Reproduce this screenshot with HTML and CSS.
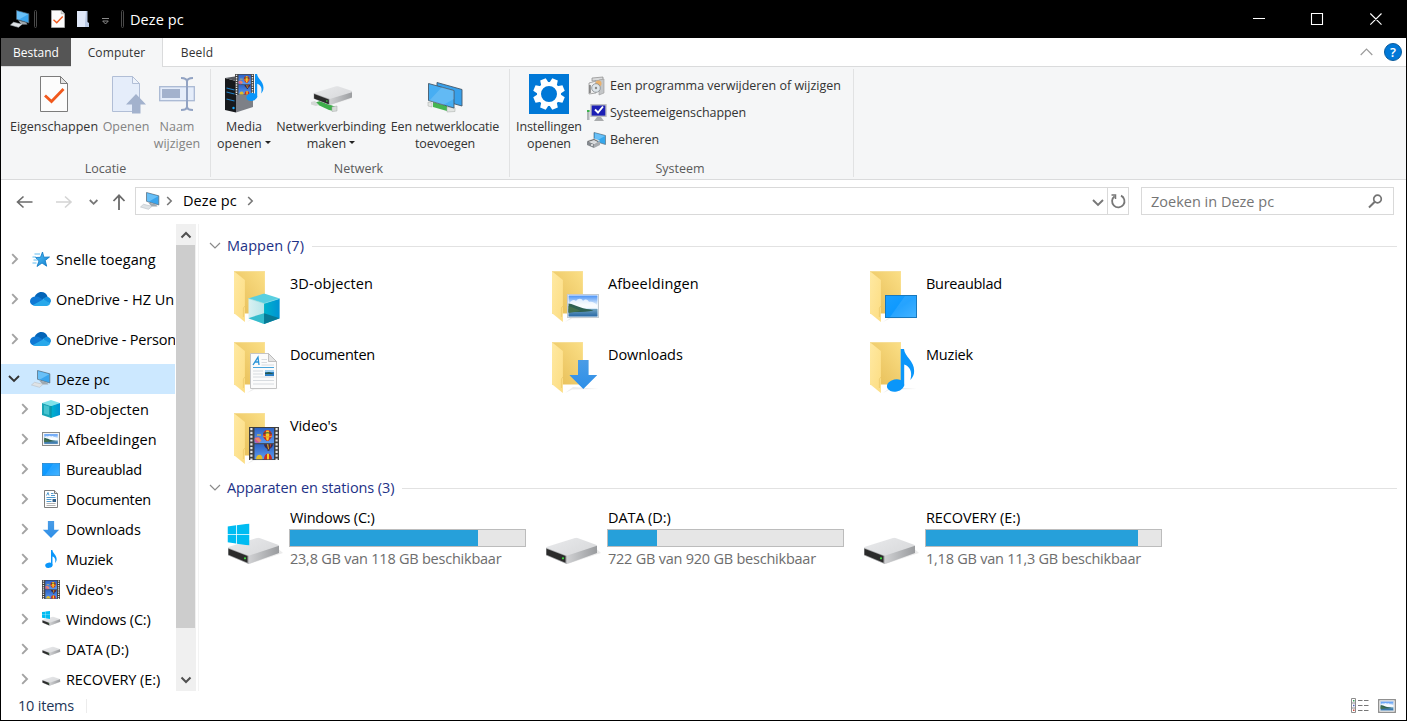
FILE: index.html
```html
<!DOCTYPE html>
<html lang="nl">
<head>
<meta charset="utf-8">
<title>Deze pc</title>
<link rel="stylesheet" href="styles.css">
</head>
<body>
<svg class="defs" width="0" height="0">
  <defs>
    <linearGradient id="gBack" x1="0" y1="1" x2="1" y2="0"><stop offset="0" stop-color="#e6bd55"/><stop offset=".5" stop-color="#f0cd6d"/><stop offset="1" stop-color="#fbdf86"/></linearGradient>
    <linearGradient id="gFlap" x1="0" y1="0" x2="1" y2="1"><stop offset="0" stop-color="#ffe9a2"/><stop offset="1" stop-color="#fcdd83"/></linearGradient>
    <linearGradient id="gSky" x1="0" y1="0" x2="0" y2="1"><stop offset="0" stop-color="#4a92f5"/><stop offset=".45" stop-color="#e4f1fb"/><stop offset="1" stop-color="#bcdcf0"/></linearGradient>
    <linearGradient id="gSea" x1="0" y1="0" x2="0" y2="1"><stop offset="0" stop-color="#6fa3c0"/><stop offset="1" stop-color="#2868a5"/></linearGradient>
    <linearGradient id="gTop" x1="0" y1="0" x2="1" y2="1"><stop offset="0" stop-color="#e9eaec"/><stop offset="1" stop-color="#d3d4d6"/></linearGradient>
    <linearGradient id="gSide" x1="0" y1="0" x2="1" y2="0"><stop offset="0" stop-color="#d0d1d3"/><stop offset="1" stop-color="#999b9e"/></linearGradient>
    <linearGradient id="gCubeL" x1="0" y1="0" x2="1" y2="0"><stop offset="0" stop-color="#d9f1f2"/><stop offset="1" stop-color="#b9e6ea"/></linearGradient>
    <linearGradient id="gCubeR" x1="0" y1="0" x2="1" y2="0"><stop offset="0" stop-color="#00b3cc"/><stop offset="1" stop-color="#0092d4"/></linearGradient>
    <linearGradient id="gScreen" x1="0" y1="0" x2="1" y2="1"><stop offset="0" stop-color="#1a9fff"/><stop offset=".5" stop-color="#0d99ff"/><stop offset="1" stop-color="#2fabff"/></linearGradient>
    <linearGradient id="gStar" x1="0" y1="0" x2="1" y2="1"><stop offset="0" stop-color="#57c3f7"/><stop offset="1" stop-color="#0f7fd0"/></linearGradient>
    <linearGradient id="gDl" x1="0" y1="0" x2="0" y2="1"><stop offset="0" stop-color="#4a9ce6"/><stop offset="1" stop-color="#2d8fe8"/></linearGradient>
    <linearGradient id="gFilm" x1="0" y1="0" x2="0" y2="1"><stop offset="0" stop-color="#2c62c4"/><stop offset="1" stop-color="#5d9af0"/></linearGradient>
  </defs>

  <symbol id="folder" viewBox="0 0 56 58">
    <path d="M20 54l7-3.500 27-.5-26-2z" fill="#ececec"/>
    <path d="M7 3.300H37.900V45.500H7z" fill="url(#gBack)"/>
    <path d="M7 3.300L17.900 12V54L7 45.300z" fill="url(#gFlap)"/>
    <path d="M7 3.600H37.900" stroke="#f6dc93" stroke-width=".7"/>
    <path d="M17.900 38l-1.500 2v9" stroke="#e8c261" stroke-width=".6" fill="none"/>
  </symbol>
  <symbol id="cube" viewBox="0 0 32 31">
    <path d="M0 5L16 0 32 5 16 10z" fill="#59cfe0"/>
    <path d="M0 5L16 10V31L0 25z" fill="url(#gCubeL)"/>
    <path d="M32 5L16 10V31L32 25z" fill="url(#gCubeR)"/>
    <path d="M0 25L16 20V31z" fill="#35bccd"/>
    <path d="M32 25L16 20V31z" fill="#087a96"/>
    <path d="M0 5L16 10 32 5" stroke="#8ee2ec" stroke-width=".6" fill="none"/>
  </symbol>
  <symbol id="cube-s" viewBox="0 0 18 18">
    <path d="M0 3L9 0 18 3 9 6z" fill="#7fe3ea"/>
    <path d="M0 3L9 6V18L0 15z" fill="#1aa5b5"/>
    <path d="M2 5L7 6.500V15L2 13.500z" fill="#46c3cf"/>
    <path d="M18 3L9 6V18L18 15z" fill="url(#gCubeR)"/>
    <path d="M9 6v12" stroke="#0a7f93" stroke-width=".8"/>
  </symbol>
  <symbol id="photo" viewBox="0 0 32 24" preserveAspectRatio="none">
    <rect x=".5" y=".5" width="31" height="23" fill="#fff" stroke="#c3cbd2"/>
    <rect x="1.500" y="1.500" width="29" height="21" fill="url(#gSky)"/>
    <path d="M2 10c2-4 5-5 7-3 2-3 6-3 7 0 3-3 5-1 6 1 3-1 6 1 8 3v3H2z" fill="#fff" opacity=".75"/>
    <path d="M1.500 15H30.500V22.500H1.500z" fill="url(#gSea)"/>
    <path d="M1.500 9.500c4 .5 7 2 11 3.500 5 2 9 2 14 3.500-8 2-18 1.500-25 1.500z" fill="#2f6152"/>
    <path d="M1.500 12c4 1 8 3 12 5l-12 2z" fill="#44714c"/>
  </symbol>
  <symbol id="screen" viewBox="0 0 32 23" preserveAspectRatio="none">
    <rect x=".5" y=".5" width="31" height="22" fill="url(#gScreen)" stroke="#1878bd"/>
    <path d="M5 22L20 1H31V22z" fill="#fff" opacity=".1"/>
  </symbol>
  <symbol id="doc" viewBox="0 0 27 36">
    <path d="M.5.5H18.500L26.500 8.500V35.500H.5z" fill="#fbfbfb" stroke="#c4c4c4"/>
    <path d="M18.500.5V8.500H26.500z" fill="#e4e4e4" stroke="#b5b5b5" stroke-width=".8"/>
    <path d="M3 12L8 4.200 9 12M4.800 9h4" fill="none" stroke="#2a94d8" stroke-width="1.300"/>
    <path d="M11.500 6.500H17M11.500 9.500H17M11.500 12H24M3 18H13M3 21H13M3 24H24M3 27.500H24M3 31H24" stroke="#d3d7db" stroke-width=".9"/>
    <path d="M3 14.500H24" stroke="#4aa5dc"/>
    <rect x="15" y="17" width="9" height="6" fill="#2c7fc4"/><path d="M15 17h9v2h-9z" fill="#a5d4f4"/><path d="M15 20l4-1 5 2H15z" fill="#28584c"/>
  </symbol>
  <symbol id="down" viewBox="0 0 28 29"><path d="M8.700 0H19.300V15H28L14 29 0 15H8.700z" fill="url(#gDl)"/></symbol>
  <symbol id="note" viewBox="0 0 28 43">
    <ellipse cx="8.800" cy="36.500" rx="8.700" ry="6.200" fill="#0a96fa" transform="rotate(-12 8.800 36.500)"/>
    <path d="M14 0H17.300C18 8 27.500 11.500 27.500 22c0 4-1.500 6.500-3.800 9C26 22 23 17.500 17.500 15.500V37l-3.500 1z" fill="#0a96fa"/>
  </symbol>
  <symbol id="film" viewBox="0 0 30 33">
    <rect width="30" height="33" fill="#3f3f3f"/>
    <path d="M2.400 1V33M27.600 1V33" stroke="#e7e7e7" stroke-width="2.200" stroke-dasharray="2.200 1.600"/>
    <rect x="5.500" y="1" width="19.500" height="15.200" fill="url(#gFilm)"/>
    <rect x="5.500" y="17.200" width="19.500" height="15" fill="url(#gFilm)"/>
    <circle cx="8.500" cy="13" r="3" fill="#c85a9a"/><path d="M5.500 11.500l4-1 3 3-2 2z" fill="#e58a6a"/><path d="M8 8h4" stroke="#e0c040" stroke-width="1.200"/>
    <path d="M14 8c0-3 2-5 4.500-5S23 5 23 8s-2 4.500-3.500 6h-2C16 12.500 14 11 14 8z" fill="#c92b23"/><path d="M17.300 3.400c-1 3-.6 6.500.4 10h1.600c1-3.500 1.400-7 .4-10z" fill="#f6cf27"/><path d="M14 9q4.500 2 9 0" fill="none" stroke="#e8a02a" stroke-width="1.300"/><path d="M14.500 6.500q4-1.500 8 0" fill="none" stroke="#2b5a3e" stroke-width="1.100"/>
    <path d="M15 17.200h9c0 2-2 4-3.500 5v1.500h-2V22.200C17 21.200 15 19.200 15 17.200z" fill="#3f2b40"/><path d="M18 17.200h1.300l.6 5h-.8z" fill="#f0b429"/><path d="M21 17.200h1.300l-1.500 4.500z" fill="#c93a30"/>
    <path d="M7 32.200c0-3 1.500-4.500 3.500-4.500s3 1.500 3 4.500z" fill="#e2bd28"/><path d="M15 32.200c0-3.500 1.500-5.500 4-5.500s4 2 4 5.500z" fill="#c92b23"/><path d="M18 26.800h2v5.400h-2z" fill="#f6cf27"/>
  </symbol>
  <symbol id="drive" viewBox="0 0 56 30">
    <path d="M21 27L56 15.500 52 12z" fill="#ebebeb"/>
    <path d="M1 10.500Q1 9.700 2 9.300L30 .4Q31.300 0 32.500.4L51 7.200Q52 7.600 52 8.500V15.500L21.700 26.500 1 17.700z" fill="url(#gTop)"/>
    <path d="M52 8.200V15.500L21.700 26.500V18.200z" fill="url(#gSide)"/>
    <path d="M1 10.200L21.700 18.200V26.500L1 17.800z" fill="#a5a6a8"/>
    <path d="M1.500 11.200L20.500 18.600V25.300L1.500 17.300z" fill="#2b2b2b"/>
    <circle cx="18" cy="20.800" r="1.100" fill="#3fe03f"/>
  </symbol>
  <symbol id="winlogo" viewBox="0 0 22 22">
    <path d="M0 3L8.500 1.800V10.500H0zM9.300 1.700L22 0V10.500H9.300zM0 11.300H8.500V20L0 18.800zM9.300 11.300H22V22L9.300 20.200z" fill="#00bcf2"/>
  </symbol>
  <symbol id="pc" viewBox="0 0 20 18">
    <path d="M6.500.5L18.800 3.800V13L6.500 9.300z" fill="#3aa5ee" stroke="#5b6a76" stroke-width=".7"/>
    <path d="M7 1.200L18.200 4.200 9 9.500 7 8.900z" fill="#69c0f7"/>
    <path d="M8 10.200L16 12.600 17.500 14.500 11.500 14.500z" fill="#9fa8af"/>
    <path d="M3.500 12.300L12 14.300 8.500 17.300 .5 15z" fill="#dfe3e6" stroke="#b9c0c6" stroke-width=".6"/>
  </symbol>
  <symbol id="cloud" viewBox="0 0 21 14">
    <path d="M4.500 6C5 2.500 8 0 11.300 0c3 0 5.500 1.800 6.300 4.700L12 8z" fill="#0364b8"/>
    <path d="M5 4.600c2-.3 3.500.2 5 1.100L14 8 4 13.600C1.500 13.300 0 11.500 0 9.300 0 6.800 2 4.800 5 4.600z" fill="#0f78d4"/>
    <path d="M13 6.500l4-1.800c2.300.2 4 2 4 4.600l-1 2L15 10z" fill="#1490df"/>
    <path d="M3 13.100L13.500 7.300 20.300 11.500C19.500 13 18.300 14 16.500 14H5C4.200 14 3.600 13.700 3 13.100z" fill="#28a8ea"/>
  </symbol>
  <symbol id="star" viewBox="0 0 18 17">
    <path d="M10.500 1l1.400 5.200L17.500 6l-4.300 3.500 1.500 5.700L10 12l-5 3.500 2-5.700L3.500 6.500l5-.2z" fill="url(#gStar)" stroke="#0b76c3" stroke-width=".8"/>
    <path d="M2.500 3H8M.5 6H4M1.500 9H6M.5 12H4.500" stroke="#51b4ef" stroke-width=".9"/>
  </symbol>
  <symbol id="page-check" viewBox="0 0 28 36">
    <path d="M.5.500H20.500L27.500 7.500V35.500H.5z" fill="#fcfcfc" stroke="#7c7c7c"/>
    <path d="M20.500.5V7.500H27.500z" fill="#e3e3e3" stroke="#7c7c7c"/>
    <path d="M5 19.500L11.500 25.500 23.500 13" fill="none" stroke="#f1581c" stroke-width="2.800"/>
  </symbol>
  <symbol id="chev-r" viewBox="0 0 8 12"><path d="M1.200 1.200L6 6 1.200 10.800" fill="none" stroke="currentColor" stroke-width="1.900"/></symbol>
  <symbol id="chev-d" viewBox="0 0 12 8"><path d="M1 1L6 6 11 1" fill="none" stroke="currentColor" stroke-width="var(--w,1.900)"/></symbol>
</svg>

<div class="window">
  <header class="titlebar">
    <svg class="tb-pc" width="20" height="18"><use href="#pc"/></svg>
    <svg class="tb-sep" width="3" height="18"><rect x=".5" y=".5" width="2" height="17" rx="1" fill="none" stroke="#4a4a4a"/></svg>
    <svg class="tb-check" width="14" height="18"><use href="#page-check"/></svg>
    <svg class="tb-folder" width="12" height="16" viewBox="0 0 12 16"><path d="M0 0H9V12H12V16H0z" fill="#dfe8f8"/><path d="M9 0h1.500v11l1.500 1v4H8V12z" fill="#b9c9e4"/></svg>
    <svg class="tb-more" width="7" height="7" viewBox="0 0 7 7"><path d="M0 .5H7M.7 3h5.600L3.500 6z" fill="none" stroke="#9a9a9a" stroke-width=".9"/></svg>
    <svg class="tb-sep2" width="3" height="18"><rect x=".5" y=".5" width="2" height="17" rx="1" fill="none" stroke="#4a4a4a"/></svg>
    <span class="title t15 w-pc">Deze pc</span>
    <svg class="win-ctl" width="130" height="14" viewBox="0 0 130 14"><path d="M0 6.500H12M58.500 1.500H69.500V12.500H58.500zM117.300 1.500L128.500 12.700M128.500 1.500L117.300 12.700" fill="none" stroke="#fff" stroke-width="1.100"/></svg>
  </header>

  <nav class="tabs">
    <span class="tab file">Bestand</span>
    <span class="tab active">Computer</span>
    <span class="tab view">Beeld</span>
    <svg class="collapse" width="13" height="8" viewBox="0 0 13 8"><path d="M.7 7L6.500 1.200 12.300 7" fill="none" stroke="#9b9b9b" stroke-width="1.200"/></svg>
    <span class="help">?</span>
  </nav>

  <section class="ribbon">
    <div class="group g1">
      <div class="tools">
        <div class="tool b92"><svg class="ic" width="28" height="36"><use href="#page-check"/></svg><span>Eigenschappen</span></div>
        <div class="tool b52 off"><svg class="ic ic-open" width="36" height="38" viewBox="0 0 36 38"><path d="M1.500.5H21.500L28.500 7.500V35.500H1.500z" fill="#e5edfa" stroke="#b1bed6"/><path d="M21.500.5V7.500H28.500z" fill="#eef3fb" stroke="#b1bed6"/><path d="M25 18L35 28.500H29.500V37.500H21V28.500H15z" fill="#a3b2cd"/></svg><span>Openen</span></div>
        <div class="tool b50 off"><svg class="ic" width="36" height="36" viewBox="0 0 36 36"><rect x=".7" y="10.700" width="34.600" height="14" fill="#e5edfa" stroke="#a9b8d3" stroke-width="1.300"/><rect x="3" y="13" width="18" height="9" fill="#a3b2cd"/><path d="M28 4V32M22 2c3 0 6 1 6 3.500C28 3 31 2 34 2M22 34c3 0 6-1 6-3.500 0 2.500 3 3.500 6 3.500" fill="none" stroke="#92a3c3" stroke-width="2"/></svg><span>Naam<br>wijzigen</span></div>
      </div>
      <div class="caption">Locatie</div>
    </div>
    <div class="group g2">
      <div class="tools">
        <div class="tool b56"><svg class="ic" width="40" height="40" viewBox="0 0 40 40"><path d="M1 4L12 7V38.500L1 36z" fill="#17191c"/><path d="M1 4L14 2 30 5 12 7z" fill="#55585e"/><path d="M12 7L29 5V33L12 38.500z" fill="#7d8087"/><path d="M2.500 14l8 2M2.500 18l8 2M2.500 25l8 2" stroke="#2382c8" stroke-width="1.200"/><circle cx="9.500" cy="34" r="1.200" fill="#17a9ff"/><use href="#film" x="11" y="0" width="19" height="21"/><use href="#note" x="22" y="0" width="18" height="27"/></svg><span>Media<br>openen <i class="dd"></i></span></div>
        <div class="tool b114"><svg class="ic" width="42" height="40" viewBox="0 0 42 40"><path d="M4 29l6-2 16 6-2 4-5-1z" fill="#3fae4b"/><path d="M1 28l4-1 4 4-3 1-5-1.500z" fill="#d4d8d6"/><path d="M22 33l5-1v5l-5 .5z" fill="#d7dbd9" stroke="#a5aaa7" stroke-width=".5"/><g transform="translate(3 12) scale(.77 .72)"><use href="#drive" width="56" height="30"/></g></svg><span class="l-net">Netwerkverbinding<br>maken <i class="dd"></i></span></div>
        <div class="tool b114"><svg class="ic" width="36" height="40" viewBox="0 0 36 40"><path d="M10 8.500L35 15.500V32L10 25z" fill="#38a0ea" stroke="#45586a" stroke-width=".9"/><path d="M6 28l14 4v5L6 33z" fill="#45b552"/><path d="M1 28l4 1v4l-4-1zM20 33l8 1v3.500l-8 .5z" fill="#e2e5e3" stroke="#a5aaa7" stroke-width=".5"/><path d="M1.500 9.500L27 16.500V34L1.500 26.500z" fill="#47aef3" stroke="#45586a" stroke-width=".9"/><path d="M2 27L15 13 27 16.500V25L16 31z" fill="#fff" opacity=".15"/></svg><span class="l-net">Een netwerklocatie<br>toevoegen</span></div>
      </div>
      <div class="caption">Netwerk</div>
    </div>
    <div class="group g3">
      <div class="tools">
        <div class="tool b70"><svg class="gear" width="40" height="40" viewBox="0 0 40 40"><rect width="40" height="40" fill="#0078d7"/><g transform="translate(20 20)" fill="#fff"><g id="teeth"><path d="M-4-10.500L-3-15.800H3L4-10.500z" transform="rotate(22.500)"/><path d="M-4-10.500L-3-15.800H3L4-10.500z" transform="rotate(67.500)"/><path d="M-4-10.500L-3-15.800H3L4-10.500z" transform="rotate(112.500)"/><path d="M-4-10.500L-3-15.800H3L4-10.500z" transform="rotate(157.500)"/></g><use href="#teeth" transform="rotate(180)"/><circle r="10" fill="none" stroke="#fff" stroke-width="4"/></g></svg><span class="l-inst">Instellingen<br>openen</span></div>
        <div class="links">
          <div><svg width="20" height="20" viewBox="0 0 20 20"><path d="M5 2L16 1V4L5 5z" fill="#d9dadb" stroke="#888" stroke-width=".7"/><path d="M12 4l5-1v14l-5 2z" fill="#c4c6c8" stroke="#999" stroke-width=".6"/><path d="M2 7l7-2v12l-7 1z" fill="#eee" stroke="#8a8a8a" stroke-width=".7"/><circle cx="11.500" cy="7.500" r="3" fill="#e9b06a"/><circle cx="9" cy="12" r="4.300" fill="#dfe6ea" stroke="#858b90" stroke-width=".8"/><circle cx="9" cy="12" r="1.200" fill="#888"/><path d="M3 9v8" stroke="#444"/></svg><span>Een programma verwijderen of wijzigen</span></div>
          <div><svg width="20" height="18" viewBox="0 0 20 18"><path d="M0 6h2.500v10H0z" fill="#b0b5b8"/><path d="M0 6h2.500v2H0z" fill="#39b54a"/><rect x="4" y=".8" width="15" height="11.500" fill="#1c1fb5" stroke="#bcbdbe" stroke-width="1.400"/><path d="M8 5.500l3 3 5-6" fill="none" stroke="#fff" stroke-width="1.900"/><path d="M10 13h4l3 4H7z" fill="#a9abad"/></svg><span class="l-sys">Systeemeigenschappen</span></div>
          <div><svg width="20" height="18" viewBox="0 0 20 18"><path d="M7 1.500L18.500 4.500V13.500L7 10z" fill="#35a7ec" stroke="#5d7180" stroke-width=".7"/><path d="M8 2.200L18 5 10 9.500 8 9z" fill="#69c0f7"/><path d="M0 9.500l7-2 6 2-6 3z" fill="#d9dbdd"/><path d="M0 10l7 3v4l-7-3z" fill="#84898e"/><path d="M7 13l6-3v4l-6 3z" fill="#a7abaf"/><path d="M1 10.500l6-2 4 2" fill="none" stroke="#666"/><path d="M4 14h2" stroke="#eee" stroke-width="1.500"/></svg><span class="l-beh">Beheren</span></div>
        </div>
      </div>
      <div class="caption">Systeem</div>
    </div>
  </section>

  <section class="addressrow">
    <svg class="navs" width="112" height="18" viewBox="0 0 112 18"><g fill="none" stroke-width="1.600"><path d="M2.500 9H17.500M8.500 3.500L2.500 9 8.500 14.500" stroke="#6b6b6b"/><path d="M41 9H56M50 3.500L56 9 50 14.500" stroke="#d4d4d4"/><path d="M74.800 7L78.600 10.800 82.400 7" stroke="#777" stroke-width="1.800"/><path d="M104 17V2.500M98.500 8L104 2.300 109.500 8" stroke="#6b6b6b" stroke-width="1.800"/></g></svg>
    <div class="address">
      <svg width="20" height="18"><use href="#pc"/></svg>
      <svg class="c1" width="7" height="10"><use href="#chev-r"/></svg>
      <span class="t15 crumb w-pc">Deze pc</span>
      <svg class="c1" width="7" height="10"><use href="#chev-r"/></svg>
      <svg class="drop" width="12" height="8"><use href="#chev-d"/></svg>
      <div class="refresh"><svg width="16" height="16" viewBox="0 0 16 16"><path d="M4.600 3.200A6.200 6.200 0 1 0 11 2.600" fill="none" stroke="#777" stroke-width="1.800"/><path d="M1.500 2H5.500V6" fill="none" stroke="#777" stroke-width="1.500"/></svg></div>
    </div>
    <div class="search"><span class="t15 w-zoek">Zoeken in Deze pc</span><svg width="15" height="15" viewBox="0 0 15 15"><circle cx="9.500" cy="5" r="3.800" fill="none" stroke="#747474" stroke-width="1.700"/><path d="M6.800 7.800L1 13.500" stroke="#747474" stroke-width="2"/></svg></div>
  </section>

  <main class="body">
    <aside class="tree t15">
      <div class="row top"><svg class="ch" width="8" height="12"><use href="#chev-r"/></svg><svg class="i" width="18" height="17"><use href="#star"/></svg><span class="w-snel">Snelle toegang</span></div>
      <div class="row top"><svg class="ch" width="8" height="12"><use href="#chev-r"/></svg><svg class="i cloud" width="21" height="14"><use href="#cloud"/></svg><span class="w-hz">OneDrive - HZ Un</span></div>
      <div class="row top"><svg class="ch" width="8" height="12"><use href="#chev-r"/></svg><svg class="i cloud" width="21" height="14"><use href="#cloud"/></svg><span>OneDrive - Person</span></div>
      <div class="row top sel"><svg class="ch open" width="12" height="8"><use href="#chev-d"/></svg><svg class="i" width="20" height="18"><use href="#pc"/></svg><span class="w-pc">Deze pc</span></div>
      <div class="row"><svg class="ch" width="8" height="12"><use href="#chev-r"/></svg><svg class="i" width="18" height="18"><use href="#cube-s"/></svg><span class="w-3d">3D-objecten</span></div>
      <div class="row"><svg class="ch" width="8" height="12"><use href="#chev-r"/></svg><svg class="i" width="18" height="14" viewBox="0 0 18 14"><rect x=".5" y=".5" width="17" height="13" fill="#fff" stroke="#8b8b8b"/><use href="#photo" x="1.500" y="1.500" width="15" height="11"/></svg><span class="w-afb">Afbeeldingen</span></div>
      <div class="row"><svg class="ch" width="8" height="12"><use href="#chev-r"/></svg><svg class="i" width="18" height="13"><use href="#screen"/></svg><span class="w-bur">Bureaublad</span></div>
      <div class="row"><svg class="ch" width="8" height="12"><use href="#chev-r"/></svg><svg class="i" width="18" height="18" viewBox="0 0 18 18"><path d="M2.500.5H12.500L15.500 3.500V17.500H2.500z" fill="#fff" stroke="#7d7d7d"/><path d="M12.500.5V3.500h3" fill="#ddd" stroke="#7d7d7d"/><path d="M4.500 5.500L6 2.500 7 5.500M9 3.500h2.500M4.500 7.500h9M4.500 9.500h5M4.500 11.500h5M9 5.500h4" fill="none" stroke="#3d8fca" stroke-width=".9"/><path d="M4.500 13.500h9M4.500 15.500h9" stroke="#aaa" stroke-width=".9"/><path d="M10.500 9h3.500v3h-3.500z" fill="#315f89"/></svg><span class="w-bur">Documenten</span></div>
      <div class="row"><svg class="ch" width="8" height="12"><use href="#chev-r"/></svg><svg class="i" width="18" height="17"><use href="#down"/></svg><span class="w-dow">Downloads</span></div>
      <div class="row"><svg class="ch" width="8" height="12"><use href="#chev-r"/></svg><svg class="i" width="18" height="18"><use href="#note"/></svg><span>Muziek</span></div>
      <div class="row"><svg class="ch" width="8" height="12"><use href="#chev-r"/></svg><svg class="i" width="18" height="19" viewBox="0 0 30 33" preserveAspectRatio="none"><use href="#film" width="30" height="33"/></svg><span class="w-dow">Video's</span></div>
      <div class="row"><svg class="ch" width="8" height="12"><use href="#chev-r"/></svg><svg class="i" width="19" height="16" viewBox="0 0 19 16"><use href="#drive" y="5.500" width="19.500" height="10.400"/><use href="#winlogo" y="0" width="8" height="8"/></svg><span>Windows (C:)</span></div>
      <div class="row"><svg class="ch" width="8" height="12"><use href="#chev-r"/></svg><svg class="i" width="19" height="16" viewBox="0 0 19 16"><use href="#drive" y="5.500" width="19.500" height="10.400"/></svg><span class="w-data">DATA (D:)</span></div>
      <div class="row"><svg class="ch" width="8" height="12"><use href="#chev-r"/></svg><svg class="i" width="19" height="16" viewBox="0 0 19 16"><use href="#drive" y="5.500" width="19.500" height="10.400"/></svg><span class="w-data">RECOVERY (E:)</span></div>
    </aside>
    <div class="scroll"><svg width="12" height="8" viewBox="0 0 12 8"><path d="M1.500 6.500L6 2 10.500 6.500" fill="none" stroke="#505050" stroke-width="2"/></svg><div class="thumb"></div><svg class="sd" width="12" height="8" viewBox="0 0 12 8"><path d="M1.500 1.500L6 6 10.500 1.500" fill="none" stroke="#505050" stroke-width="2"/></svg></div>

    <div class="content t15">
      <div class="ghead"><svg width="12" height="8"><use href="#chev-d"/></svg><span class="w-map">Mappen (7)</span><hr></div>
      <div class="tiles">
        <div class="tile"><svg width="56" height="58"><use href="#folder" width="56" height="58"/><use href="#cube" x="21.300" y="25.300" width="31.500" height="31"/></svg><span class="w-3d">3D-objecten</span></div>
        <div class="tile"><svg width="56" height="58"><use href="#folder" width="56" height="58"/><use href="#photo" x="22" y="26" width="32" height="24"/></svg><span class="w-afb">Afbeeldingen</span></div>
        <div class="tile"><svg width="56" height="58"><use href="#folder" width="56" height="58"/><use href="#screen" x="22" y="27" width="32" height="23"/></svg><span class="w-bur">Bureaublad</span></div>
        <div class="tile"><svg width="56" height="58"><use href="#folder" width="56" height="58"/><use href="#doc" x="23" y="14" width="27" height="36"/></svg><span class="w-bur">Documenten</span></div>
        <div class="tile"><svg width="56" height="58"><use href="#folder" width="56" height="58"/><use href="#down" x="24.300" y="21" width="28" height="29"/></svg><span class="w-dow">Downloads</span></div>
        <div class="tile"><svg width="56" height="58"><use href="#folder" width="56" height="58"/><use href="#note" x="23.700" y="10" width="28" height="43"/></svg><span>Muziek</span></div>
        <div class="tile"><svg width="56" height="58"><use href="#folder" width="56" height="58"/><use href="#film" x="22" y="17" width="30" height="33"/></svg><span class="w-dow">Video's</span></div>
      </div>
      <div class="ghead g-drives"><svg width="12" height="8"><use href="#chev-d"/></svg><span class="w-app">Apparaten en stations (3)</span><hr></div>
      <div class="tiles drives">
        <div class="drive"><svg width="56" height="56"><use href="#drive" y="22.500" width="56" height="30"/><use href="#winlogo" x=".5" y="8.500" width="22" height="22"/></svg><div><span class="dn">Windows (C:)</span><div class="bar"><b style="width:188px"></b></div><span class="sub">23,8 GB van 118 GB beschikbaar</span></div></div>
        <div class="drive"><svg width="56" height="56"><use href="#drive" y="22.500" width="56" height="30"/></svg><div><span class="dn w-data">DATA (D:)</span><div class="bar"><b style="width:49px"></b></div><span class="sub">722 GB van 920 GB beschikbaar</span></div></div>
        <div class="drive"><svg width="56" height="56"><use href="#drive" y="22.500" width="56" height="30"/></svg><div><span class="dn w-data">RECOVERY (E:)</span><div class="bar"><b style="width:212px"></b></div><span class="sub">1,18 GB van 11,3 GB beschikbaar</span></div></div>
      </div>
    </div>
  </main>

  <footer class="status t15"><span class="count">10 items</span>
    <svg class="views" width="50" height="18" viewBox="0 0 50 18"><path d="M1.500 1.500H5.500V15.500H1.500zM1.500 6H5.500M1.500 11H5.500" fill="#fff" stroke="#8c8c8c"/><path d="M3 3h1.500v1.500H3z" fill="#37a05b"/><path d="M3 7.800h1.500v1.500H3z" fill="#4b65b8"/><path d="M3 12.500h1.500V14H3z" fill="#d04a3a"/><path d="M8 3.500h4.500M14 3.500h4.500M8 8.500h4.500M14 8.500h4.500M8 13.500h4.500M14 13.500h4.500" stroke="#777"/><rect x="28.700" y="2.700" width="16.600" height="12.600" fill="#fff" stroke="#8c8c8c" stroke-width="1.300"/><use href="#photo" x="30" y="4" width="14" height="10"/></svg>
  </footer>
</div>
</body>
</html>
```
FILE: styles.css
```css
* { box-sizing: border-box; }
body { margin: 0; font-family: "Open Sans", "Noto Sans", sans-serif; color: #000; background: #000; }
svg { display: block; flex: none; }
.defs { position: absolute; }
.t15 { font-size: 14.5px; letter-spacing: -.2px; white-space: nowrap; }
.window { width: 1407px; height: 721px; display: flex; flex-direction: column; background: #fff; border: solid #000; border-width: 0 1px 1px; }

/* per-label tracking */
.w-pc { letter-spacing: .1px; }
.w-zoek { letter-spacing: 0; }
.w-snel, .w-map { letter-spacing: .05px; }
.w-hz { letter-spacing: 0; }
.w-3d { letter-spacing: .08px; }
.w-afb { letter-spacing: .14px; }
.w-bur { letter-spacing: -.29px; }
.w-dow, .w-app, .w-data { letter-spacing: -.1px; }

.titlebar { height: 38px; background: #000; color: #fff; display: flex; align-items: center; padding-left: 9px; }
.tb-sep { margin-left: 4px; }
.tb-check { margin-left: 14px; }
.tb-folder { margin-left: 12px; }
.tb-more { margin: 5px 0 0 13px; }
.tb-sep2 { margin-left: 12px; }
.title { margin-left: 6px; }
.win-ctl { margin-left: auto; margin-right: 23px; }

.tabs { height: 29px; display: flex; border-bottom: 1px solid #dadbdc; font-size: 12px; color: #333; align-items: stretch; }
.tab { display: flex; align-items: center; justify-content: center; }
.file { width: 70px; height: 28px; background: #555; color: #fff; }
.active { width: 92px; height: 29px; background: #f5f6f7; border-right: 1px solid #dadbdc; letter-spacing: .15px; }
.view { width: 68px; height: 28px; letter-spacing: .15px; }
.collapse { margin: 10px 11px 0 auto; }
.help { width: 18px; height: 18px; margin: 5px 4px 0 0; border-radius: 50%; background: #0078d7; border: 1px solid #0c5c9c; color: #fff; font-size: 13px; font-weight: 600; line-height: 16px; text-align: center; }

.ribbon { height: 113px; background: #f5f6f7; border-bottom: 1px solid #dadbdc; display: flex; font-size: 12.500px; line-height: 17px; color: #333; white-space: nowrap; }
.group { margin: 2px 0; border-right: 1px solid #e1e2e3; height: 108px; display: flex; flex-direction: column; }
.g1 { width: 210px; padding-left: 7px; }
.g2 { width: 299px; padding-left: 5px; }
.g3 { width: 344px; padding-left: 4px; }
.tools { display: flex; height: 91px; }
.tool { display: flex; flex-direction: column; align-items: center; text-align: center; height: 83px; }
.tool > span { margin-top: auto; height: 34px; }
.tool .ic { margin-top: 7px; }
.tool .ic-open { margin-left: 5px; }
.g2 .tool .ic { margin-top: 5px; }
.gear { margin-top: 5px; }
.b92 { width: 92px; }
.b52 { width: 52px; }
.b50 { width: 50px; }
.b56 { width: 56px; margin-right: 2px; }
.b114 { width: 114px; }
.b70 { width: 70px; margin-right: 3px; }
.l-net, .l-inst { letter-spacing: -.12px; }
.off { color: #838383; }
.dd { display: inline-block; border: solid transparent; border-width: 3.500px 3.500px 0; border-top-color: #222; vertical-align: 4px; }
.links { padding-top: 3px; }
.links div { display: flex; align-items: center; gap: 3px; height: 27px; }
.l-sys, .l-beh { letter-spacing: -.06px; }
.caption { text-align: center; color: #5a5a5a; }
.g1 .caption { padding-right: 7px; }
.g2 .caption { padding-right: 8px; }
.g3 .caption { padding-right: 7px; }

.addressrow { height: 44px; display: flex; padding: 7px 0 0 14px; }
.navs { margin: 6px 8px 0 0; }
.address { width: 994px; height: 28px; border: 1px solid #d9d9d9; display: flex; align-items: center; padding-left: 4px; color: #777; }
.address .c1 { margin-left: 6px; }
.crumb { margin: -1px 0 0 10px; color: #000; }
.address .crumb + .c1 { margin-left: 10px; }
.drop { margin-left: auto; margin-right: 3px; margin-top: 3px; }
.refresh { width: 21px; height: 26px; border-left: 1px solid #d9d9d9; display: flex; align-items: center; justify-content: center; }
.search { width: 253px; height: 28px; margin-left: 12px; border: 1px solid #d9d9d9; display: flex; align-items: center; justify-content: space-between; padding: 0 10px 0 9px; color: #757575; }

.body { height: 467px; display: flex; }
.tree { width: 175px; padding-top: 20px; overflow: hidden; }
.row { width: 174px; height: 30px; display: grid; grid-template-columns: 20px 20px 1fr; align-items: center; padding-left: 20px; overflow: hidden; }
.row .i { justify-self: center; }
.row span { padding-left: 5px; }
.row.top { padding-left: 10px; margin-bottom: 10px; }
.row .cloud { justify-self: start; margin-left: -1px; }
.row .ch { color: #a3a3a3; }
.row .open { color: #333; margin-left: -3px; }
.row.sel { background: #cce8ff; margin-bottom: 0; }
.scroll { width: 20px; background: #f0f0f0; display: flex; flex-direction: column; align-items: center; padding: 7px 1px 0 0; }
.thumb { width: 19px; height: 383px; margin-top: 6px; background: #cdcdcd; }
.sd { margin: auto 0 7px; }

.content { flex: 1; margin-left: 2px; border-left: 1px solid #f3f3f3; padding-left: 10px; }
.ghead { display: flex; align-items: center; height: 20px; margin-top: 12px; color: #8a8a8a; --w: 1.2; }
.ghead span { color: #1e3287; margin: -2px 0 0 6px; }
.ghead hr { flex: 1; margin: 0 9px 0 8px; border: 0; border-top: 1px solid #e2e2e2; }
.tiles { display: grid; grid-template-columns: repeat(3, 318px); grid-auto-rows: 71px; padding: 12px 0 0 18px; }
.tile { display: flex; gap: 7px; }
.tile span { line-height: 20px; margin-top: 6px; }
.g-drives { margin-top: -3px; }
.drives { padding-top: 17px; }
.drive { display: flex; gap: 6px; }
.dn, .sub { display: block; line-height: 20px; padding-left: 1px; }
.dn { height: 14px; line-height: 6px; }
.bar { width: 237px; height: 18px; background: #e6e6e6; border: 1px solid #bcbcbc; }
.bar b { display: block; height: 16px; background: #26a0da; }
.sub { color: #6d6d6d; margin-top: 2px; letter-spacing: -.23px; }

.status { height: 29px; display: flex; align-items: center; padding: 0 6px 0 17px; color: #1d3557; }
.count { border-right: 1px solid #ececec; padding-right: 12px; line-height: 14px; }
.views { margin-left: auto; }
```
